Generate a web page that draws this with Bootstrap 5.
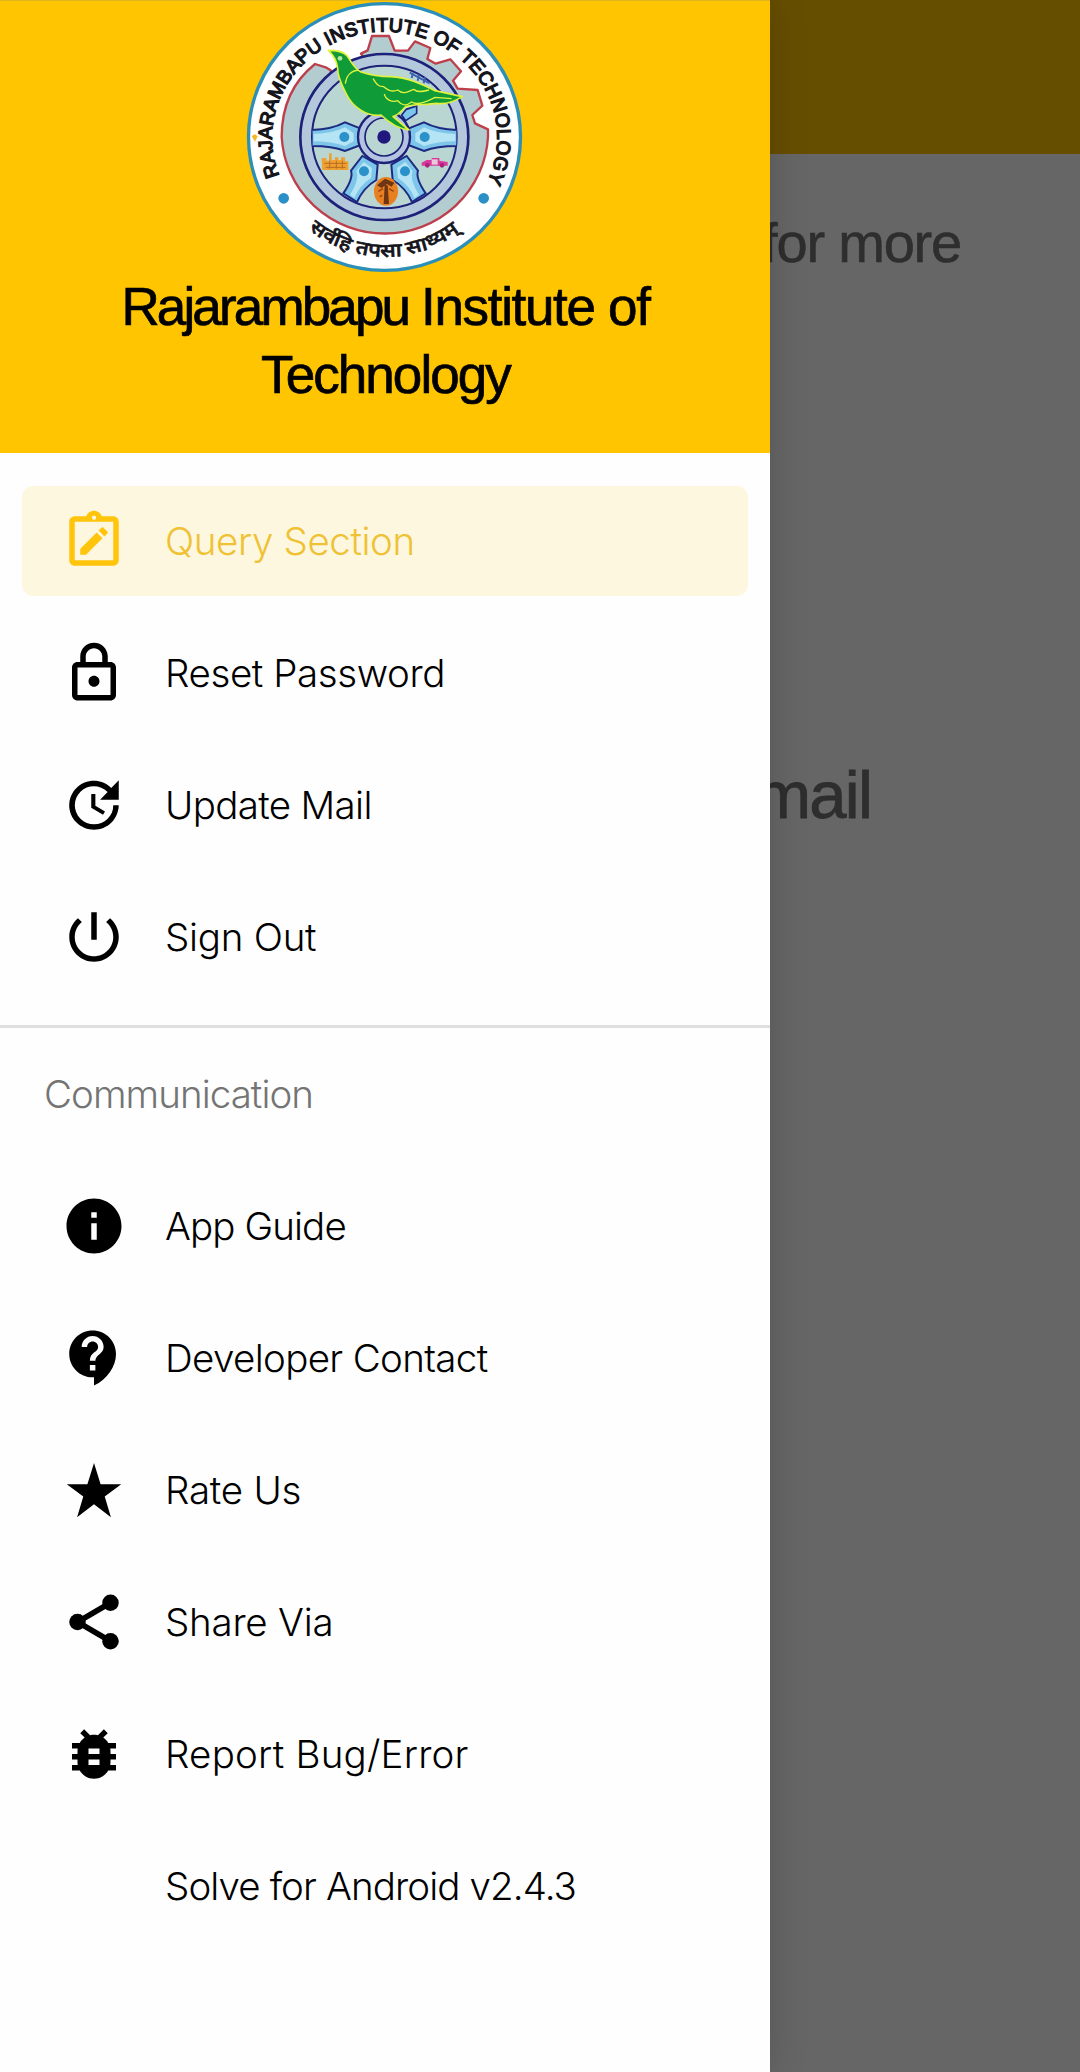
<!DOCTYPE html>
<html lang="en">
<head>
<meta charset="utf-8">
<meta name="viewport" content="width=device-width, initial-scale=1">
<title>Rajarambapu Institute of Technology</title>
<link href="https://cdn.jsdelivr.net/npm/bootstrap@5.3.0/dist/css/bootstrap.min.css" rel="stylesheet">
<style>
  body { font-family: Inter, "Noto Sans", sans-serif; background: #666; color: #000; }
  .app-shell { height: 2072px; }
  .app-bar { height: 154px; background: #664e00; }
  .page-text { font-family: "Liberation Sans", Arial, sans-serif; color: #2e2e2e; line-height: 1; white-space: nowrap; }
  .page-hint { font-size: 56px; letter-spacing: -1.2px; padding: 61px 119px 0 0; -webkit-text-stroke: .6px #2e2e2e; }
  .page-mail { font-size: 67px; letter-spacing: -1.8px; padding: 490px 209px 0 0; -webkit-text-stroke: .8px #2e2e2e; }
  .drawer { width: 770px; background: #fefefe; box-shadow: 0 0 36px rgba(0,0,0,.17); }
  .drawer-head { height: 453px; background: #ffc500; border-top: 1px solid #e0b51c; }
  .drawer-logo { width: 300px; height: 280px; margin-top: -1px; }
  .drawer-title { font-family: "Liberation Sans", Arial, sans-serif; font-size: 53px; font-weight: 400; line-height: 68px; letter-spacing: -1.93px; -webkit-text-stroke: .7px #000; margin: -7px 0 0 1px; }
  .title-tight { letter-spacing: -2.85px; }
  .title-loose { letter-spacing: -1.33px; }
  .menu-list { gap: 22px; }
  .menu-top { padding: 33px 22px; }
  .menu-bottom { padding: 0 22px; }
  .menu-row { height: 110px; padding-left: 39px; border-radius: 11px; color: #000; text-decoration: none; font-size: 38.5px; font-weight: 300; line-height: 1; white-space: nowrap; gap: 38px; }
  .menu-row svg, .icon-gap { width: 66px; height: 66px; fill: currentColor; flex: none; }
  .menu-row.is-active { background: #fef7df; color: #ffc50d; }
  .is-active .lbl { color: #efc235; }
  .section-rule { height: 3px; background: #dfdfdf; }
  .section-name { height: 143px; padding: 47px 0 0 44px; font-size: 38.5px; font-weight: 300; line-height: 1; letter-spacing: -.95px; color: #747474; }
  .ls-a { letter-spacing: -.4px; } .ls-b { letter-spacing: -.65px; } .ls-c { letter-spacing: -.9px; } .ls-d { letter-spacing: .21px; } .ls-e { letter-spacing: -.25px; }
</style>
</head>
<body>
<div class="app-shell position-relative overflow-hidden">
  <main class="d-flex flex-column">
    <div class="app-bar"></div>
    <div class="page-text page-hint text-end">for more</div>
    <div class="page-text page-mail text-end">mail</div>
  </main>

  <aside class="drawer position-absolute top-0 start-0 h-100 d-flex flex-column">
    <header class="drawer-head d-flex flex-column align-items-center text-center">
      <svg class="drawer-logo flex-shrink-0" viewBox="0 0 900 840" role="img" aria-label="Institute emblem">
        <defs>
          <path id="arcTop" d="M133 527 A338 319 0 1 1 757 545"/>
          <path id="arcBottom" d="M221 688 A362 362 0 0 0 690 680"/>
          <clipPath id="wheelClip"><ellipse cx="448" cy="411" rx="217" ry="214"/></clipPath>
          <g id="spokeSide">
            <path d="M230 390 Q290 388 330 367 L385 389 V432 L330 453 Q292 438 230 438Z" fill="#7ec5ea" stroke="#1d2a82" stroke-width="6"/>
            <path d="M236 402 Q296 400 330 382 L356 400 V424 L330 438 Q290 424 236 424Z" fill="#b5e4f5"/>
            <circle cx="328" cy="411" r="15" fill="#2b91cb"/>
          </g>
          <g id="spokeLow">
            <path d="M325 580 Q356 535 348 512 L382 468 L428 494 L424 540 Q386 562 366 606Z" fill="#7ec5ea" stroke="#1d2a82" stroke-width="6"/>
            <path d="M345 584 Q374 540 364 514 L386 486 L411 504 L408 534 Q374 556 358 594Z" fill="#b5e4f5"/>
            <circle cx="387" cy="514" r="15" fill="#2b91cb"/>
          </g>
        </defs>
        <ellipse cx="448.500" cy="411" rx="408" ry="400" fill="#fff" stroke="#2b8fb8" stroke-width="10"/>
        <path d="M50 408 l10 -5 l8 6 l-8 16Z" fill="#f4b828"/>
        <path d="M240 192 C170 248 140 325 140 411 A310 307 0 0 0 759 411 L759 388 L720 370 L712 345 L742 317 L728 270 L668 266 L654 242 L678 214 L646 178 L602 191 L577 177 L586 144 L540 124 L519 152 L479 152 L462 108 L411 108 L398 151 L378 161 L396 184 L404 212 L350 240 L306 258 L290 245 L287 211 L272 202Z" fill="#b3cccf" stroke="#bd3f4b" stroke-width="7" stroke-linejoin="round"/>
        <ellipse cx="448" cy="411" rx="252" ry="249" fill="#b4c8dc" stroke="#1d2179" stroke-width="8"/>
        <ellipse cx="448" cy="411" rx="217" ry="214" fill="#b9d6d2" stroke="#1d2179" stroke-width="6"/>
        <g clip-path="url(#wheelClip)">
          <use href="#spokeSide"/>
          <use href="#spokeSide" transform="translate(897 0) scale(-1 1)"/>
          <use href="#spokeLow"/>
          <use href="#spokeLow" transform="translate(897 0) scale(-1 1)"/>
          <path d="M500 345 L514 328 L545 318 V340 L512 362Z" fill="#7ec5ea" stroke="#1d2a82" stroke-width="5"/>
        </g>
        <path d="M524 218 L584 250 M534 218 l-4 16 M552 224 l-4 18 M570 232 l-4 18" stroke="#3b62b4" stroke-width="6" fill="none"/>
        <circle cx="447" cy="411" r="78" fill="#b4c4e0" stroke="#1d2179" stroke-width="7"/>
        <circle cx="447" cy="411" r="57" fill="#b9d6d2" stroke="#1d2179" stroke-width="5"/>
        <circle cx="447" cy="411" r="20" fill="#20187e"/>
        <ellipse cx="453" cy="574" rx="36" ry="43" fill="#e87f20"/>
        <path d="M446 612 L449 556 H458 L462 612Z M426 556 L450 536 L478 548 L470 560 L456 552 L440 564Z" fill="#6d3513"/>
        <path d="M430 574 l14 -8 M476 574 l-14 -8 M434 590 l8 -4" stroke="#8d4512" stroke-width="4"/>
        <path d="M260 474 h14 v8 h8 v-22 h8 v20 h10 v-8 h10 v8 h8 v-8 h12 v12 h10 v26 h-78Z" fill="#efa02e"/>
        <path d="M268 490 h66 M272 502 h60 M284 482 v24 M304 482 v24 M322 482 v24" stroke="#b56d26" stroke-width="3"/>
        <path d="M560 488 L575 480 H590 V474 H613 V482 L638 486 V497 H560Z" fill="#dc379b"/>
        <path d="M590 478 h18 v16 h-18Z" fill="#e9c9dc"/>
        <circle cx="577" cy="496" r="7" fill="#a9237a"/><circle cx="621" cy="496" r="7" fill="#a9237a"/>
        <g stroke="#dff23d" stroke-width="5" stroke-linejoin="round">
          <path d="M280 151 C302 151 322 152 335 166 C350 186 356 205 378 216 C408 226 438 230 466 230 C520 232 565 254 600 272 L682 290 C660 304 630 314 604 310 C570 315 538 312 512 320 C500 330 496 343 474 350 L522 390 C486 386 462 368 438 345 C396 352 352 320 334 282 C322 258 308 234 308 206 C306 182 296 166 280 151Z" fill="#0f9c38"/>
          <path d="M331 251 C334 226 350 212 370 210 M414 236 C424 252 430 260 446 260 C458 270 472 278 488 270 C506 286 520 274 536 268 C546 278 560 276 582 270 M448 282 C452 300 472 308 488 302 C500 316 512 320 530 306 C548 318 576 304 600 292 L650 296" fill="none" stroke-width="4"/>
        </g>
        <circle cx="315" cy="175" r="7" fill="#bfe6a0"/>
        <circle cx="146" cy="595" r="16" fill="#2b8fc8"/><circle cx="746" cy="595" r="16" fill="#2b8fc8"/>
        <text font-family="'Liberation Sans', Arial, sans-serif" font-size="58" fill="#15151c" stroke="#15151c" stroke-width="4"><textPath href="#arcTop" textLength="1284" lengthAdjust="spacing">RAJARAMBAPU INSTITUTE OF TECHNOLOGY</textPath></text>
        <text font-family="'Noto Sans', sans-serif" font-size="57" font-weight="500" fill="#15151c" stroke="#15151c" stroke-width="2"><textPath href="#arcBottom" textLength="488" lengthAdjust="spacingAndGlyphs">सर्वहि तपसा साध्यम्</textPath></text>
      </svg>
      <h1 class="drawer-title"><span class="title-tight">Rajarambapu</span> <span class="title-loose">Institute of</span><br>Technology</h1>
    </header>

    <nav class="menu-list menu-top d-flex flex-column">
      <a class="menu-row is-active d-flex align-items-center" href="#"><svg viewBox="0 0 24 24"><path d="M19 3h-4.180C14.400 1.840 13.300 1 12 1s-2.400.840-2.820 2H5c-1.100 0-2 .900-2 2v14c0 1.100.900 2 2 2h14c1.100 0 2-.900 2-2V5c0-1.100-.900-2-2-2zm-7-.250c.410 0 .750.340.750.750s-.340.750-.750.750-.750-.340-.750-.750.340-.750.750-.750zM19 19H5V5h14v14z"/><path d="M15.080 11.030l-2.120-2.120L7 14.860V17h2.100zM16.850 9.270c.200-.200.200-.510 0-.710l-1.410-1.410c-.200-.200-.510-.200-.710 0l-1.060 1.060 2.120 2.120 1.060-1.060z"/></svg><span class="lbl ls-a">Query Section</span></a>
      <a class="menu-row d-flex align-items-center" href="#"><svg viewBox="0 0 24 24"><path d="M18 8h-1V6c0-2.760-2.240-5-5-5S7 3.240 7 6v2H6c-1.100 0-2 .900-2 2v10c0 1.100.900 2 2 2h12c1.100 0 2-.900 2-2V10c0-1.100-.900-2-2-2zM9 6c0-1.660 1.340-3 3-3s3 1.340 3 3v2H9V6zm9 14H6V10h12v10zm-6-3c1.100 0 2-.900 2-2s-.900-2-2-2-2 .900-2 2 .900 2 2 2z"/></svg><span class="ls-a">Reset Password</span></a>
      <a class="menu-row d-flex align-items-center" href="#"><svg viewBox="0 0 24 24"><path d="M21 10.120h-6.780l2.740-2.820c-2.730-2.700-7.150-2.800-9.880-.100-2.730 2.710-2.730 7.080 0 9.790s7.150 2.710 9.880 0C18.320 15.650 19 14.080 19 12.100h2c0 1.980-.880 4.550-2.640 6.290-3.510 3.480-9.210 3.480-12.720 0-3.500-3.470-3.530-9.110-.020-12.580s9.140-3.470 12.650 0L21 3v7.120zM12.500 8v4.250l3.500 2.080-.720 1.210L11 13V8h1.500z"/></svg><span class="ls-b">Update Mail</span></a>
      <a class="menu-row d-flex align-items-center" href="#"><svg viewBox="0 0 24 24"><path d="M13 3h-2v10h2V3zm4.830 2.170l-1.420 1.420C17.990 7.860 19 9.810 19 12c0 3.870-3.130 7-7 7s-7-3.130-7-7c0-2.190 1.010-4.140 2.580-5.420L6.170 5.170C4.230 6.820 3 9.260 3 12c0 4.970 4.030 9 9 9s9-4.030 9-9c0-2.740-1.230-5.180-3.170-6.830z"/></svg><span class="ls-e">Sign Out</span></a>
    </nav>

    <div class="section-rule flex-shrink-0"></div>
    <div class="section-name flex-shrink-0">Communication</div>

    <nav class="menu-list menu-bottom d-flex flex-column">
      <a class="menu-row d-flex align-items-center" href="#"><svg viewBox="0 0 24 24"><path d="M12 2C6.480 2 2 6.480 2 12s4.480 10 10 10 10-4.480 10-10S17.520 2 12 2zm1 15h-2v-6h2v6zm0-8h-2V7h2v2z"/></svg><span class="ls-c">App Guide</span></a>
      <a class="menu-row d-flex align-items-center" href="#"><svg viewBox="0 0 24 24"><path d="M11.500 2C6.810 2 3 5.810 3 10.500S6.810 19 11.500 19h.500v3c4.860-2.340 8-7 8-11.500C20 5.810 16.190 2 11.500 2zm1 14.500h-2v-2h2v2zm0-3.500h-2c0-3.250 3-3 3-5 0-1.100-.900-2-2-2s-2 .900-2 2h-2c0-2.210 1.790-4 4-4s4 1.790 4 4c0 2.500-3 2.750-3 5z"/></svg><span class="ls-b">Developer Contact</span></a>
      <a class="menu-row d-flex align-items-center" href="#"><svg viewBox="0 0 24 24"><path d="M12 2.200l2.400 7.700h7.500l-6 4.500 2.250 7.500L12 17.200l-6.150 4.700 2.250-7.500-6-4.500h7.500z"/></svg><span class="ls-e">Rate Us</span></a>
      <a class="menu-row d-flex align-items-center" href="#"><svg viewBox="0 0 24 24"><path d="M18 5L6 12l12 7" fill="none" stroke="currentColor" stroke-width="2"/><circle cx="18" cy="5" r="3"/><circle cx="6" cy="12" r="3"/><circle cx="18" cy="19" r="3"/></svg><span class="ls-e">Share Via</span></a>
      <a class="menu-row d-flex align-items-center" href="#"><svg viewBox="0 0 24 24"><path d="M20 8h-2.810c-.450-.780-1.070-1.450-1.820-1.960L17 4.410 15.590 3l-2.170 2.170C12.960 5.060 12.490 5 12 5c-.490 0-.960.060-1.410.170L8.410 3 7 4.410l1.620 1.630C7.880 6.550 7.260 7.220 6.810 8H4v2h2.090c-.050.330-.090.660-.090 1v1H4v2h2v1c0 .340.040.670.090 1H4v2h2.810c1.040 1.790 2.970 3 5.190 3s4.150-1.210 5.190-3H20v-2h-2.090c.050-.330.090-.660.090-1v-1h2v-2h-2v-1c0-.340-.040-.670-.090-1H20V8zm-6 8h-4v-2h4v2zm0-4h-4v-2h4v2z"/></svg><span class="ls-d">Report Bug/Error</span></a>
      <a class="menu-row d-flex align-items-center" href="#"><span class="icon-gap"></span><span class="ls-c">Solve for Android v2.4.3</span></a>
    </nav>
  </aside>
</div>
<script src="https://cdn.jsdelivr.net/npm/bootstrap@5.3.0/dist/js/bootstrap.bundle.min.js"></script>
</body>
</html>
